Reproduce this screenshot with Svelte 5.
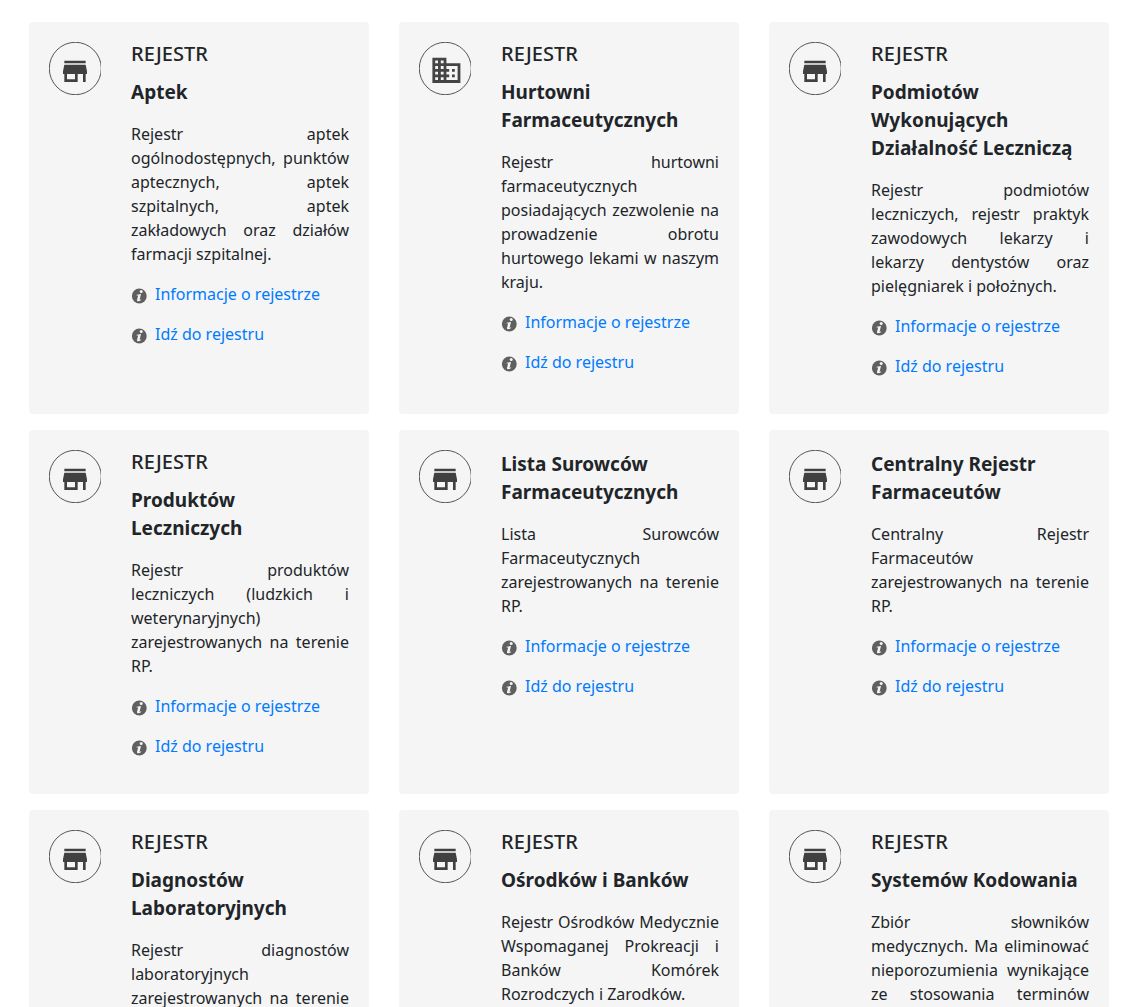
<script>
  const registers = [
    { label: 'REJESTR', title: 'Aptek', icon: 'store', text: 'Rejestr aptek ogólnodostępnych, punktów aptecznych, aptek szpitalnych, aptek zakładowych oraz działów farmacji szpitalnej.' },
    { label: 'REJESTR', title: 'Hurtowni Farmaceutycznych', icon: 'building', text: 'Rejestr hurtowni farmaceutycznych posiadających zezwolenie na prowadzenie obrotu hurtowego lekami w naszym kraju.' },
    { label: 'REJESTR', title: 'Podmiotów Wykonujących Działalność Leczniczą', icon: 'store', text: 'Rejestr podmiotów leczniczych, rejestr praktyk zawodowych lekarzy i lekarzy dentystów oraz pielęgniarek i położnych.' },
    { label: 'REJESTR', title: 'Produktów Leczniczych', icon: 'store', text: 'Rejestr produktów leczniczych (ludzkich i weterynaryjnych) zarejestrowanych na terenie RP.' },
    { label: '', title: 'Lista Surowców Farmaceutycznych', icon: 'store', text: 'Lista Surowców Farmaceutycznych zarejestrowanych na terenie RP.' },
    { label: '', title: 'Centralny Rejestr Farmaceutów', icon: 'store', text: 'Centralny Rejestr Farmaceutów zarejestrowanych na terenie RP.' },
    { label: 'REJESTR', title: 'Diagnostów Laboratoryjnych', icon: 'store', text: 'Rejestr diagnostów laboratoryjnych zarejestrowanych na terenie RP.' },
    { label: 'REJESTR', title: 'Ośrodków i Banków', icon: 'store', text: 'Rejestr Ośrodków Medycznie Wspomaganej Prokreacji i Banków Komórek Rozrodczych i Zarodków.' },
    { label: 'REJESTR', title: 'Systemów Kodowania', icon: 'store', text: 'Zbiór słowników medycznych. Ma eliminować nieporozumienia wynikające ze stosowania terminów medycznych.' }
  ];
  const links = ['Informacje o rejestrze', 'Idź do rejestru'];
</script>

<main class="grid">
  {#each registers as item}
    <article class="card">
      <svg class="badge" viewBox="0 0 52 53" aria-hidden="true">
        <ellipse cx="26.3" cy="26.5" rx="26" ry="26.2" fill="none" stroke="#444" stroke-width="0.9" />
        {#if item.icon === 'building'}
          <path transform="translate(10.6 11.5) scale(1.4)" fill="#444" d="M12 7V3H2v18h20V7H12zM6 19H4v-2h2v2zm0-4H4v-2h2v2zm0-4H4V9h2v2zm0-4H4V5h2v2zm4 12H8v-2h2v2zm0-4H8v-2h2v2zm0-4H8V9h2v2zm0-4H8V5h2v2zm10 12h-8v-2h2v-2h-2v-2h2v-2h-2V9h8v10zm-2-8h-2v2h2v-2zm0 4h-2v2h2v-2z" />
        {:else}
          <path transform="translate(10 13.3) scale(1.333)" fill="#404040" d="M20 4H4v2h16V4zm1 10v-2l-1-5H4l-1 5v2h1v6h10v-6h4v6h2v-6h1zm-9 4H6v-4h6v4z" />
        {/if}
      </svg>
      <div class="content">
        {#if item.label}<p class="label">{item.label}</p>{/if}
        <h2>{item.title}</h2>
        <p class="text">{item.text}</p>
        {#each links as link}
          <p class="link">
            <svg class="info" viewBox="0 0 16 16" aria-hidden="true">
              <circle cx="8.3" cy="8" r="7.4" fill="#5f5f5f" />
              <circle cx="10.2" cy="3.4" r="1.500" fill="#f5f5f5" />
              <path d="M5.700 6.700L10 6.100L8.500 12L10.200 11.300L9.900 12.300Q7.900 13.700 6.500 13.200Q5.700 12.800 6.100 11.500L7.200 7.500L5.600 7.400Z" fill="#f5f5f5" />
            </svg>
            <a href="#rejestr">{link}</a>
          </p>
        {/each}
      </div>
    </article>
  {/each}
</main>

<style>
  :global(body) {
    margin: 0;
    background: #fff;
  }
  .grid {
    display: grid;
    grid-template-columns: repeat(3, minmax(0, 1fr));
    gap: 16px 30px;
    padding: 22px 32px 16px 29px;
    color: #212529;
    font: 16px/24px "Noto Sans", sans-serif;
  }
  .card {
    display: flex;
    align-items: flex-start;
    gap: 30px;
    padding: 20px;
    border-radius: 4px;
    background: #f5f5f5;
  }
  .badge {
    flex: none;
    width: 52px;
    height: 53px;
  }
  .content {
    flex: 1;
    min-width: 0;
  }
  p {
    margin: 0 0 16px;
  }
  .label {
    margin-bottom: 12px;
    font-size: 20px;
    font-weight: 500;
  }
  h2 {
    margin: 0 0 16px;
    font-size: 19px;
    font-weight: 700;
    line-height: 28px;
  }
  .text {
    text-align: justify;
  }
  .link {
    display: flex;
    align-items: flex-end;
    gap: 8px;
  }
  .info {
    flex: none;
    width: 16px;
    height: 16px;
    margin-bottom: 2px;
  }
  a {
    color: #007bff;
    text-decoration: none;
  }
  a:hover {
    text-decoration: underline;
  }
</style>
